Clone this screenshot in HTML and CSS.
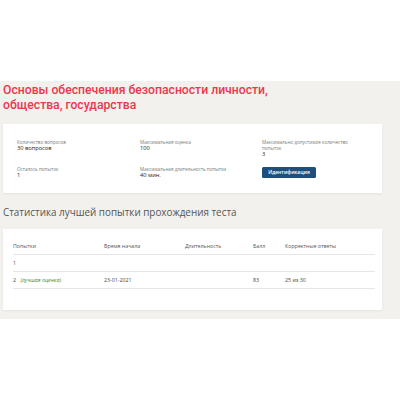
FILE: index.html
```html
<!DOCTYPE html>
<html lang="ru">
<head>
<meta charset="utf-8">
<link rel="stylesheet" href="styles.css">
</head>
<body>
<div class="top"></div>
<main class="page">
  <h1 class="title">Основы обеспечения безопасности личности,<br>общества, государства</h1>
  <section class="card info">
    <div class="cell"><div class="label">Количество вопросов</div><div class="value">30 вопросов</div></div>
    <div class="cell"><div class="label">Максимальная оценка</div><div class="value">100</div></div>
    <div class="cell"><div class="label">Максимально допустимое количество<br>попыток</div><div class="value">3</div></div>
    <div class="cell"><div class="label">Осталось попыток</div><div class="value">1</div></div>
    <div class="cell"><div class="label">Максимальная длительность попытки</div><div class="value">40 мин.</div></div>
    <div class="cell"><button class="btn">Идентификация</button></div>
  </section>
  <h2 class="subtitle">Статистика лучшей попытки прохождения теста</h2>
  <section class="card stats">
    <table class="tbl">
      <thead>
        <tr><th class="c1">Попытки</th><th class="c2">Время начала</th><th class="c3">Длительность</th><th class="c4">Балл</th><th>Корректные ответы</th></tr>
      </thead>
      <tbody>
        <tr><td>1</td><td></td><td></td><td></td><td></td></tr>
        <tr><td>2 <span class="best">(лучшая оценка)</span></td><td>23-01-2021</td><td></td><td>83</td><td>25 из 30</td></tr>
      </tbody>
    </table>
  </section>
</main>
</body>
</html>
```

FILE: styles.css
```css
html, body {
  margin: 0;
  padding: 0;
  background: #ffffff;
  font-family: "Open Sans", "DejaVu Sans", sans-serif;
}
.top {
  height: 81px;
}
.page {
  background: #f2f1ed;
  height: 238px;
  padding: 2px 18px 0 3px;
  box-sizing: border-box;
}
.title {
  margin: 0;
  font-family: Roboto, "Open Sans", sans-serif;
  font-weight: 500;
  font-size: 12.2px;
  line-height: 14.5px;
  color: #e8394f;
}
.card {
  background: #ffffff;
  box-shadow: 0 1px 2px rgba(0,0,0,0.06);
}
.info {
  margin-top: 11.5px;
  height: 69px;
  box-sizing: border-box;
  padding: 15px 14px 0 14px;
  display: grid;
  grid-template-columns: 123px 122px auto;
  grid-template-rows: 27.5px auto;
}
.cell {
  font-size: 5px;
  line-height: 6px;
}
.label {
  font-size: 4.6px;
  line-height: 6px;
  color: #7a7a7a;
}
.value {
  font-size: 5.7px;
  line-height: 7px;
  color: #222222;
  font-weight: 500;
}
.btn {
  display: block;
  margin-top: 0.5px;
  width: 54px;
  height: 11px;
  padding: 0;
  border: none;
  border-radius: 1.5px;
  background: #1e4f7c;
  color: #ffffff;
  font-family: "Open Sans", sans-serif;
  font-size: 5px;
  font-weight: 600;
  line-height: 11px;
}
.subtitle {
  margin: 13px 0 0 0;
  font-size: 9.9px;
  line-height: 13px;
  font-weight: 400;
  color: #555555;
}
.stats {
  margin-top: 10.5px;
  height: 81px;
  box-sizing: border-box;
  padding: 9px 7px 0 10px;
}
.tbl {
  width: 100%;
  border-collapse: collapse;
  font-size: 5.3px;
  color: #444444;
}
.tbl th, .tbl td {
  text-align: left;
  padding: 0;
  font-weight: 400;
}
.tbl th {
  height: 15.7px;
  color: #555555;
  border-bottom: 1px solid #e6e6e6;
}
.tbl td {
  height: 16px;
  border-bottom: 1px solid #e6e6e6;
}
.c1 { width: 91px; }
.c2 { width: 81px; }
.c3 { width: 68px; }
.c4 { width: 32px; }
.best {
  margin-left: 3px;
  color: #3b8a3b;
  font-style: italic;
}
```
